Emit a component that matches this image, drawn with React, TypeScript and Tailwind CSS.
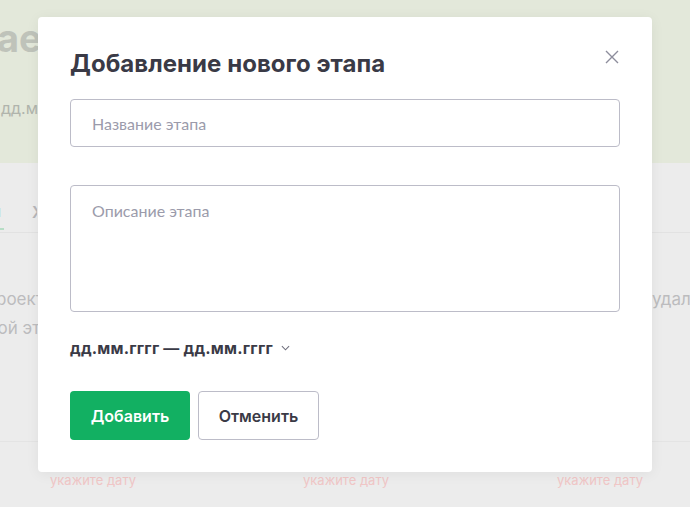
import React from "react";

const ink = "text-[#3a3a46]";

const Backdrop: React.FC = () => (
  <div className="flex flex-col h-full">
    {/* header band */}
    <div className="h-[163px] bg-[#e3e8da] pt-[16px]">
      <div className="w-[38px] overflow-hidden">
        <div className="-ml-[3px] text-[38px] font-bold text-[#bfc3ba] leading-[44px] whitespace-nowrap">
          ает
        </div>
        <div className="mt-[36px] ml-[1px] text-[16px] text-[#b0b4ac] whitespace-nowrap">
          дд.мм
        </div>
      </div>
    </div>
    {/* tabs */}
    <div className="h-[70px] bg-[#ececec] border-b border-[#e2e2e2] flex items-end">
      <div className="flex items-end gap-[28px] h-full">
        <div className="w-[4px] h-[36px] mb-[2px] border-b-2 border-[#b6ddc5] overflow-hidden flex items-center">
          <span className="text-[16px] font-semibold text-[#9fd8b6] -ml-[8px]">я</span>
        </div>
        <div className="w-[5px] overflow-hidden h-[36px] mb-[2px] flex items-center">
          <span className="text-[16px] font-semibold text-[#b6b6b9]">Ход</span>
        </div>
      </div>
    </div>
    {/* content */}
    <div className="h-[209px] bg-[#ececec] border-b border-[#e4e4e4] pt-[52px] flex">
      <div className="w-[652px]">
        <div className="w-[38px] overflow-hidden text-[17px] text-[#bcbcbe] leading-[29px] whitespace-nowrap">
          <div className="-ml-[14px]">проекта</div>
          <div className="-ml-[30px]">какой этап</div>
        </div>
      </div>
      <div className="flex-1 overflow-hidden text-[17px] text-[#bcbcbe] leading-[29px] whitespace-nowrap">
        удалить
      </div>
    </div>
    <div className="flex-1 bg-[#ececec] flex pt-[29px] text-[13px] text-[#f0c6c6]">
      <div className="w-[230px] pl-[50px]">укажите дату</div>
      <div className="w-[254px] pl-[73px]">укажите дату</div>
      <div className="pl-[73px]">укажите дату</div>
    </div>
  </div>
);

const App: React.FC = () => {
  return (
    <div
      className="relative w-[690px] h-[507px] overflow-hidden"
      style={{ fontFamily: "Inter, 'Noto Sans', sans-serif" }}
    >
      <Backdrop />

      <div className="absolute left-[38px] top-[17px] w-[614px] h-[455px] bg-white rounded-[4px] shadow-[0_2px_14px_rgba(0,0,0,0.06)] px-[32px] pt-[31px]">
        <button className="absolute right-[32px] top-[32px] w-[16px] h-[16px] text-[#8d8d9c]">
          <svg viewBox="0 0 16 16" width="16" height="16" fill="none" stroke="currentColor" strokeWidth="1.4">
            <path d="M2 2 L14 14 M14 2 L2 14" />
          </svg>
        </button>

        <h2 className={`text-[24px] leading-[32px] font-bold ${ink} tracking-[0.05px]`}>
          Добавление нового этапа
        </h2>

        <input
          type="text"
          placeholder="Название этапа"
          className="mt-[19px] block w-full h-[48px] border border-[#bcbcc8] rounded-[4px] px-[21px] text-[16px] placeholder:text-[#9b9bab] outline-none"
          style={{ fontFamily: "Lato, 'Noto Sans', sans-serif" }}
        />

        <textarea
          placeholder="Описание этапа"
          className="mt-[38px] block w-full h-[127px] border border-[#bcbcc8] rounded-[4px] px-[21px] pt-[13px] text-[16px] placeholder:text-[#9b9bab] outline-none resize-none"
          style={{ fontFamily: "Lato, 'Noto Sans', sans-serif" }}
        />

        <button className={`mt-[24px] flex items-center gap-[8px] text-[16px] font-bold ${ink} h-[24px] tracking-[0.2px]`}>
          <span>дд.мм.гггг — дд.мм.гггг</span>
          <svg viewBox="0 0 10 6" width="9" height="6" fill="none" stroke="#6f6f7d" strokeWidth="1.2">
            <path d="M1 1 L5 5 L9 1" />
          </svg>
        </button>

        <div className="mt-[31px] flex gap-[8px]">
          <button className="w-[120px] h-[49px] rounded-[4px] bg-[#12b062] text-white text-[16px] font-semibold">
            Добавить
          </button>
          <button className={`w-[121px] h-[49px] rounded-[4px] bg-white border border-[#bcbcc8] ${ink} text-[16px] font-semibold`}>
            Отменить
          </button>
        </div>
      </div>
    </div>
  );
};

export default App;
